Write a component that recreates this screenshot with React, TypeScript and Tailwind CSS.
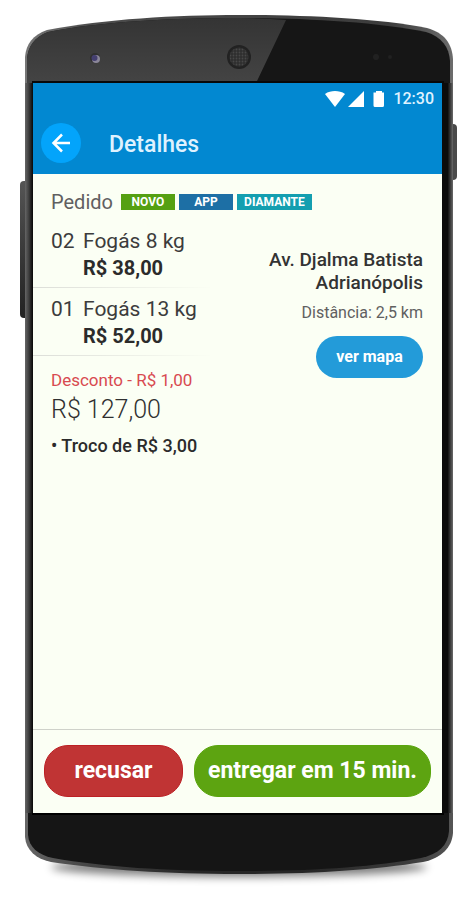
import type { ReactNode } from "react";

const items = [
  { qty: "02", name: "Fogás 8 kg", price: "R$ 38,00" },
  { qty: "01", name: "Fogás 13 kg", price: "R$ 52,00" },
];

const tags = [
  { label: "NOVO", className: "w-[54px] bg-[#55a012]" },
  { label: "APP", className: "w-[54px] bg-[#1d6fa5]" },
  { label: "DIAMANTE", className: "w-[75px] bg-[#149fb0]" },
];

function BezelTop() {
  return (
    <svg
      viewBox="0 0 428 68"
      preserveAspectRatio="none"
      className="block w-full h-[68px]"
      aria-hidden="true"
    >
      <defs>
        <linearGradient id="glare" x1="0" y1="0" x2="0" y2="1">
          <stop offset="0" stopColor="#343434" />
          <stop offset="1" stopColor="#444444" />
        </linearGradient>
        <linearGradient id="rimTop" x1="0" y1="0" x2="1" y2="0">
          <stop offset="0" stopColor="#777777" />
          <stop offset="0.15" stopColor="#4c4c4c" />
          <stop offset="0.85" stopColor="#3c3c3c" />
          <stop offset="1" stopColor="#6c6c6c" />
        </linearGradient>
        <pattern id="grille" width="3" height="3" patternUnits="userSpaceOnUse">
          <rect width="3" height="3" fill="#2e2e2e" />
          <circle cx="1.5" cy="1.5" r="0.9" fill="#484848" />
        </pattern>
      </defs>
      <path
        d="M0 68V42C1 29 8 20 22 15C80 4 150 0 214 0C278 0 350 3 402 13C420 18 427 29 428 44V68Z"
        fill="url(#rimTop)"
      />
      <path
        d="M2 68V44C3 31 10 22 23 17C80 6 150 3 214 3C278 3 350 7 401 17C417 22 424 32 425 46V68Z"
        fill="#161616"
      />
      <path
        d="M2 68V44C3 31 10 22 23 17C80 6 150 3 214 3Q238 3 261 5L232 66V68Z"
        fill="url(#glare)"
      />
      <path d="M7 66H419V68H7Z" fill="#080808" />
      {/* sensor */}
      <circle cx="70" cy="43" r="5" fill="#303030" />
      <circle cx="71" cy="44" r="4" fill="#8b8799" />
      <circle cx="69.5" cy="43" r="3" fill="#443f70" />
      {/* earpiece */}
      <circle cx="214" cy="42" r="12" fill="#222222" />
      <circle cx="214" cy="42" r="9.5" fill="url(#grille)" />
      <circle cx="351" cy="42" r="3" fill="#212121" />
      <circle cx="365" cy="42" r="2" fill="#212121" />
    </svg>
  );
}

function BezelBottom() {
  return (
    <svg
      viewBox="0 0 428 76"
      preserveAspectRatio="none"
      className="block w-full h-[76px]"
      aria-hidden="true"
    >
      <defs>
        <filter id="soft" x="-10%" y="-50%" width="120%" height="200%">
          <feGaussianBlur stdDeviation="4" />
        </filter>
        <linearGradient id="rimBottom" x1="0" y1="0" x2="1" y2="0">
          <stop offset="0" stopColor="#666666" />
          <stop offset="0.15" stopColor="#444444" />
          <stop offset="0.4" stopColor="#262626" />
          <stop offset="0.65" stopColor="#262626" />
          <stop offset="0.9" stopColor="#3c3c3c" />
          <stop offset="1" stopColor="#555555" />
        </linearGradient>
      </defs>
      <ellipse cx="214" cy="54" rx="188" ry="10" fill="#000000" opacity="0.5" filter="url(#soft)" />
      <path
        d="M0 0V24C1 37 11 46 26 49C80 57 140 61 214 61C288 61 348 57 398 49C417 45 427 34 428 20V0Z"
        fill="url(#rimBottom)"
      />
      <path
        d="M3 0V22C4 34 13 42 28 45C80 54 140 58 214 58C288 58 348 54 396 45C414 41 423 32 424 18V0Z"
        fill="#151515"
      />
      <path d="M7 0H419V2H7Z" fill="#000000" />
    </svg>
  );
}

function StatusBar() {
  return (
    <div className="flex h-8 items-center justify-end pr-2 text-[16px] font-medium text-[#dff2ff]">
      <svg width="60" height="16" viewBox="0 0 60 16" fill="#ffffff" className="mr-2" aria-hidden="true">
        <path d="M0 3C3 .7 6.500 0 10 0S17 .7 20 3L10 16Z" />
        <path d="M39 0V16H23Z" />
        <path d="M51 0H57V1.500H59V14.500Q59 16 57.500 16H50Q48.500 16 48.500 14.500V1.500H51Z" />
      </svg>
      <span>12:30</span>
    </div>
  );
}

function ActionButton({ className, children }: { className: string; children: ReactNode }) {
  return (
    <button
      type="button"
      className={`h-[52px] rounded-3xl border text-[23px] font-bold text-white whitespace-nowrap ${className}`}
    >
      {children}
    </button>
  );
}

export default function App() {
  return (
    <main className="min-h-screen bg-white pt-[15px] pr-[22px] pl-[25px] font-[Roboto,sans-serif]">
      <div className="relative">
        {/* side keys */}
        <div className="absolute top-[166px] -left-[5px] h-[137px] w-[5px] rounded-l-sm bg-linear-to-b from-[#555555] via-[#3a3a3a] to-[#222222]" />
        <div className="absolute top-[109px] -right-1 h-[56px] w-1 rounded-r-sm bg-[#4a4a4a]" />

        <BezelTop />

        <div className="flex">
          <div className="w-2 bg-linear-to-r from-[#666666] via-[#3c3c3c] to-[#080808]" />

          <section className="flex min-h-[730px] min-w-0 flex-1 flex-col bg-[#fbfff4]">
            <header className="h-[91px] bg-[#0288d1]">
              <StatusBar />
              <div className="flex items-center pt-2 pl-2">
                <button
                  type="button"
                  aria-label="Voltar"
                  className="flex size-10 items-center justify-center rounded-full bg-[#03a4fb]"
                >
                  <svg width="20" height="20" viewBox="0 0 20 20" fill="none" stroke="#ffffff" strokeWidth="2.500" aria-hidden="true">
                    <path d="M19 10H3M11 1.500L2.500 10L11 18.500" />
                  </svg>
                </button>
                <h1 className="ml-7 pt-1 text-[23px] leading-9 font-medium text-[#dff2ff]">Detalhes</h1>
              </div>
            </header>

            <div className="flex-1">
              <div className="flex items-center pt-3 pl-[18px]">
                <h2 className="text-[20px] leading-8 text-[#606060]">Pedido</h2>
                <div className="ml-2 flex gap-1">
                  {tags.map((tag) => (
                    <span
                      key={tag.label}
                      className={`h-4 text-center text-[12px] leading-4 font-bold text-white ${tag.className}`}
                    >
                      {tag.label}
                    </span>
                  ))}
                </div>
              </div>

              <div className="flex justify-between pt-0.5">
                <div className="w-[180px] shrink-0">
                  <ul>
                    {items.map((item) => (
                      <li key={item.name}>
                        <div className="flex gap-2 pt-2 pb-[5px] pl-[18px] text-[21px] leading-[27px]">
                          <span className="w-6 text-[#3c3c3c]">{item.qty}</span>
                          <div className="whitespace-nowrap">
                            <p className="text-[#3c3c3c]">{item.name}</p>
                            <p className="text-[20px] font-bold text-[#2b2b2b]">{item.price}</p>
                          </div>
                        </div>
                        <div className="h-px bg-linear-to-r from-[#dcded8] to-[#fbfff4]" />
                      </li>
                    ))}
                  </ul>

                  <div className="pt-3 pl-[18px] whitespace-nowrap">
                    <p className="text-[17px] leading-6 text-[#d84a50]">Desconto - R$ 1,00</p>
                    <p className="text-[25px] leading-9 font-light text-[#303030]">R$ 127,00</p>
                    <p className="pt-1 text-[18px] leading-7 font-medium text-[#2b2b2b]">• Troco de R$ 3,00</p>
                  </div>
                </div>

                <div className="flex flex-col items-end pt-7 pr-[19px] text-right">
                  <address className="text-[19px] leading-[23px] font-medium whitespace-nowrap text-[#333333] not-italic">
                    Av. Djalma Batista
                    <br />
                    Adrianópolis
                  </address>
                  <p className="pt-[3px] text-[16px] leading-8 text-[#606060]">Distância: 2,5 km</p>
                  <button
                    type="button"
                    className="mt-[7px] h-[42px] w-[107px] rounded-full bg-[#239bd9] text-[16px] font-bold text-white"
                  >
                    ver mapa
                  </button>
                </div>
              </div>
            </div>

            <footer className="flex gap-[11px] border-t border-[#cfd2ca] px-[11px] py-4 pt-[15px]">
              <ActionButton className="w-[139px] shrink-0 border-[#bc2024] bg-[#c03434]">recusar</ActionButton>
              <ActionButton className="min-w-0 flex-1 border-[#5aa50d] bg-[#5da411]">entregar em 15 min.</ActionButton>
            </footer>
          </section>

          <div className="w-[11px] bg-linear-to-r from-[#0b0b0b] from-50% to-[#6c6c6c]" />
        </div>

        <BezelBottom />
      </div>
    </main>
  );
}
